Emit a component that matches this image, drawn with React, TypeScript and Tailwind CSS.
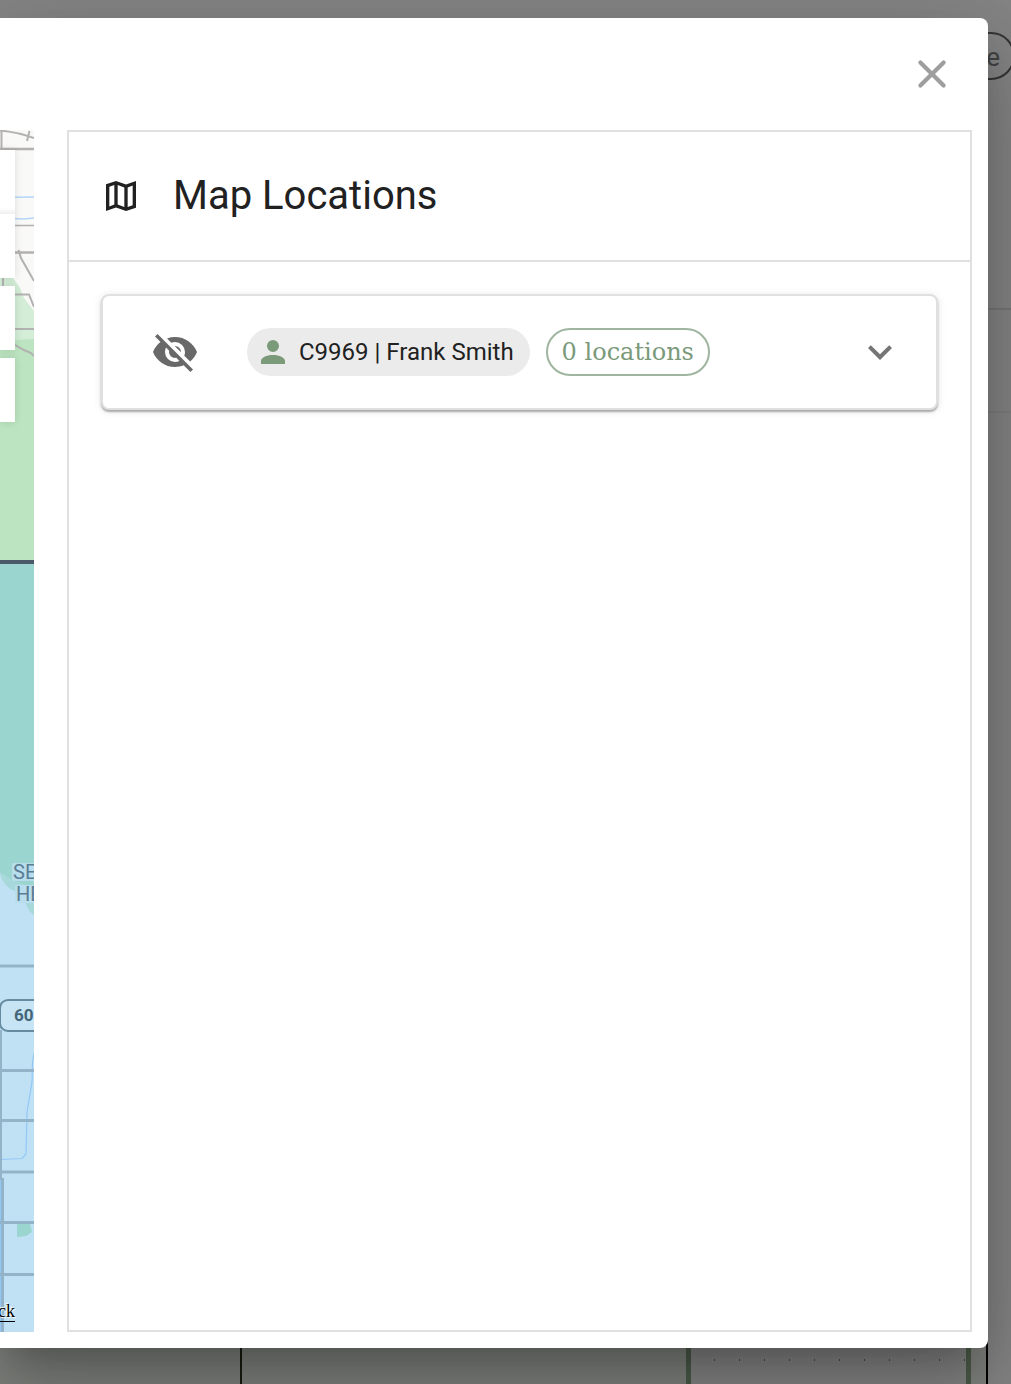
import React, { useState } from "react";

type IconProps = { path: string; className?: string };

const Icon = ({ path, className }: IconProps) => (
  <svg
    viewBox="0 0 24 24"
    fill="currentColor"
    fillRule="evenodd"
    aria-hidden="true"
    className={className}
  >
    <path d={path} />
  </svg>
);

const icons = {
  map: "M21 3L15 5.1L9 3L3 5.02V21L9 18.9L15 21L21 18.98ZM10 5.47L14 6.87V18.53L10 17.13ZM5 6.46L8 5.45V17.15L5 18.31ZM19 17.54L16 18.55V6.86L19 5.7Z",
  eyeOff:
    "M11.83,9L15,12.16C15,12.11 15,12.05 15,12A3,3 0 0,0 12,9C11.94,9 11.89,9 11.83,9M7.53,9.8L9.08,11.35C9.03,11.56 9,11.77 9,12A3,3 0 0,0 12,15C12.22,15 12.44,14.97 12.65,14.92L14.2,16.47C13.53,16.8 12.79,17 12,17A5,5 0 0,1 7,12C7,11.21 7.2,10.47 7.53,9.8M2,4.27L4.28,6.55L4.73,7C3.08,8.3 1.78,10 1,12C2.73,16.39 7,19.5 12,19.5C13.55,19.5 15.03,19.2 16.38,18.66L16.81,19.08L19.73,22L21,20.73L3.27,3M12,7A5,5 0 0,1 17,12C17,12.64 16.87,13.26 16.64,13.82L19.57,16.75C21.07,15.5 22.27,13.86 23,12C21.27,7.61 17,4.5 12,4.5C10.6,4.5 9.26,4.75 8,5.2L10.17,7.35C10.74,7.13 11.35,7 12,7Z",
  account:
    "M12,4A4,4 0 0,1 16,8A4,4 0 0,1 12,12A4,4 0 0,1 8,8A4,4 0 0,1 12,4M12,14C16.42,14 20,15.79 20,18V20H4V18C4,15.79 7.58,14 12,14Z",
  chevronDown: "M7.41,8.58L12,13.17L16.59,8.58L18,10L12,16L6,10L7.41,8.58Z",
};

const people = [{ id: "C9969", name: "Frank Smith", locations: 0 }];

// Page that stays visible behind the dialog
const PageBehind = () => (
  <div
    aria-hidden="true"
    className="absolute inset-0 flex flex-col overflow-hidden bg-[#858585]"
  >
    <div className="flex h-[308px] justify-end pt-8">
      <div className="-mr-1 h-12 w-24 rounded-full border-2 border-[#353535] pr-[13px] text-right text-[26px] leading-[46px] text-[#434343]">
        e
      </div>
    </div>
    <div className="h-[103px] border-t-2 border-[#777777] shadow-[0_1px_2px_rgba(0,0,0,0.1)]" />
    <div className="flex-1" />
    <div className="flex h-11">
      <div className="w-60 bg-[#80837e]" />
      <div className="w-[2px] bg-[#181c10]" />
      <div className="flex-1 bg-[#80837e]" />
      <div className="w-[5px] bg-[#4c5c4a]" />
      <div className="w-[275px] bg-[radial-gradient(circle_at_center,#4a4a4a_1px,transparent_1px)] bg-[length:25px_40px] bg-[position:11px_0px]" />
      <div className="w-[5px] bg-[#4c5c4a]" />
      <div className="w-[15px] bg-[#80837e]" />
      <div className="w-[2px] bg-black" />
      <div className="w-[23px]" />
    </div>
  </div>
);

const MapCanvas = () => (
  <svg
    viewBox="0 130 34 1202"
    preserveAspectRatio="xMinYMin slice"
    className="h-full w-full"
    role="img"
    aria-label="Map"
  >
    {/* Land */}
    <rect x="0" y="130" width="34" height="1202" fill="#f9f9f7" />
    <path d="M0 278H13L20 288L24 298L34 311V341H0Z" fill="#d3edd7" />
    <path d="M0 341L34 339V560H0Z" fill="#bce4c0" />
    <rect x="0" y="564" width="34" height="768" fill="#c0e1f3" />
    <path d="M0 564H34V915Q28 911 26 904L15 891Q4 888 0 874Z" fill="#a8d9da" />
    <path d="M0 564H34V888L12 880L0 872Z" fill="#9ad5cf" />
    <rect x="0" y="560" width="34" height="4" fill="#4b5a6b" />
    <path d="M17 1223H30L32 1232L26 1236L17 1237Z" fill="#9ad5cf" />

    {/* Water lines */}
    <g fill="none" stroke="#b5d7fa" strokeWidth="1.5">
      <path d="M0 197.5L34 197" />
      <path d="M0 218L24 219L34 218" />
    </g>
    <path
      d="M34 1053L32.5 1062L32 1082L27 1112L26 1154L22 1158.5L0 1159.5M0.5 1180V1332"
      fill="none"
      stroke="#91c8f8"
      strokeWidth="1.2"
    />

    {/* Roads */}
    <g fill="none" stroke="#b3b1b1" strokeWidth="2">
      <path d="M0 130.5Q17 132 34 138M29.5 131L27 141" />
      <path d="M1.5 130V149" />
      <path d="M0 149H34" strokeWidth="2.5" />
      <path d="M0 225.5H34" strokeWidth="1.5" />
      <path d="M0 252.5H34" strokeWidth="2.5" />
      <path d="M18.5 250L21 258L34 281" />
      <path d="M3 278V286" />
      <path d="M0 294.5H29L34 307" />
      <path d="M0 329H34" />
      <path d="M10 342L24 350L31 353L34 356" />
    </g>
    <g fill="none" stroke="#93b3c9" strokeWidth="3">
      <path d="M0 966H34M0 1070.5H34M0 1120.5H34M0 1172H34M0 1222.5H34M0 1274.5H34" />
      <path d="M0.5 1030V1180M2.5 1178V1332" />
    </g>

    {/* Labels */}
    <rect x="12" y="863" width="24" height="18" rx="2" fill="#b8deed" />
    <rect x="15" y="885" width="24" height="18" rx="2" fill="#b8deed" />
    <g fontFamily="Roboto, sans-serif" fontSize="20" fill="#5b7d93">
      <text x="13" y="879">SE</text>
      <text x="16" y="901">HE</text>
    </g>
    <rect x="0" y="1000" width="60" height="31" rx="8" fill="#c6e4f3" stroke="#668ba1" strokeWidth="2" />
    <text x="14" y="1021" fontFamily="Roboto, sans-serif" fontSize="17" fontWeight="700" fill="#446579">
      60
    </text>
  </svg>
);

const MapPane = () => (
  <section className="relative w-[34px] shrink-0 overflow-hidden">
    <div className="absolute inset-0">
      <MapCanvas />
    </div>
    {/* Map controls */}
    <div className="absolute top-5 left-0 flex w-[15px] flex-col gap-2">
      <div className="shadow-[0_0_8px_rgba(0,0,0,0.12)]">
        <div className="h-16 bg-white bg-linear-to-t from-[#f0f0f0] to-white to-10%" />
        <div className="h-16 bg-white" />
      </div>
      <div className="h-16 bg-white shadow-[0_0_8px_rgba(0,0,0,0.12)]" />
      <div className="h-16 bg-white shadow-[0_0_8px_rgba(0,0,0,0.12)]" />
    </div>
    <a
      href="#feedback"
      className="absolute right-[19px] bottom-[10px] border-b border-black font-['Liberation_Serif',serif] text-lg leading-5 text-black [text-shadow:1px_1px_1px_white,-1px_-1px_1px_white]"
    >
      ck
    </a>
  </section>
);

const PersonRow = ({ id, name, locations }: (typeof people)[number]) => {
  const [visible, setVisible] = useState(false);

  return (
    <li className="flex h-[116px] items-center rounded-lg border-2 border-[#e0e0e0] bg-white pr-8 pl-12 shadow-[0_2px_2px_rgba(0,0,0,0.3),0_1px_8px_rgba(0,0,0,0.1)]">
      <button
        type="button"
        aria-label="Toggle visibility"
        aria-pressed={visible}
        onClick={() => setVisible(!visible)}
        className="mr-12 text-[#696969]"
      >
        <Icon path={icons.eyeOff} className="size-12" />
      </button>
      <span className="mr-4 flex h-12 items-center rounded-full bg-[#ebebeb] pr-4 pl-2 text-2xl whitespace-nowrap text-[#212121]">
        <Icon path={icons.account} className="mr-2 size-9 text-[#7a9a7a]" />
        {id} | {name}
      </span>
      <span className="flex h-12 items-center rounded-full border-2 border-[#9fb59f] px-[14px] font-['Roboto_Slab','DejaVu_Serif',serif] text-2xl whitespace-nowrap text-[#7a9a7a]">
        {locations} locations
      </span>
      <button type="button" aria-label="Expand" className="ml-auto text-[#757575]">
        <Icon path={icons.chevronDown} className="size-12" />
      </button>
    </li>
  );
};

export default function App() {
  return (
    <div className="relative flex min-h-screen flex-col overflow-hidden pt-[18px] pr-[23px] pb-9 font-[Roboto,sans-serif]">
      <PageBehind />

      <div
        role="dialog"
        aria-labelledby="locations-title"
        className="relative flex flex-1 flex-col rounded-r-lg bg-white pr-4 pb-4 shadow-[0_22px_30px_-14px_rgba(0,0,0,0.2),0_48px_76px_6px_rgba(0,0,0,0.14),0_18px_92px_16px_rgba(0,0,0,0.12)]"
      >
        <header className="flex h-28 items-center justify-end pr-4">
          <button type="button" aria-label="Close" className="text-[#9e9e9e]">
            <svg
              viewBox="0 0 24 24"
              fill="none"
              stroke="currentColor"
              strokeWidth="2.1"
              strokeLinecap="round"
              className="size-12"
            >
              <path d="M6.2 6.2L17.8 17.8M17.8 6.2L6.2 17.8" />
            </svg>
          </button>
        </header>

        <div className="flex flex-1 gap-[33px]">
          <MapPane />

          <section className="flex-1 border-2 border-[#e0e0e0]">
            <div className="flex h-[130px] items-center gap-8 border-b-2 border-[#e0e0e0] px-8 text-[#212121]">
              <Icon path={icons.map} className="size-10" />
              <h2 id="locations-title" className="text-[40px] leading-[64px]">
                Map Locations
              </h2>
            </div>
            <ul className="p-8">
              {people.map((person) => (
                <PersonRow key={person.id} {...person} />
              ))}
            </ul>
          </section>
        </div>
      </div>
    </div>
  );
}
